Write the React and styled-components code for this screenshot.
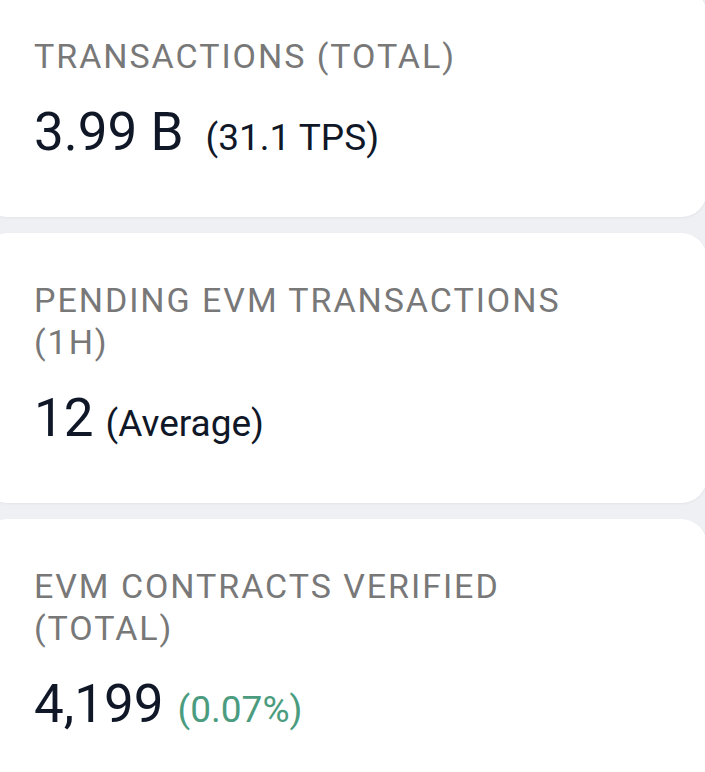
import React from "react";
import styled, { createGlobalStyle } from "styled-components";

const Global = createGlobalStyle`
  html, body {
    margin: 0;
    padding: 0;
    background: #eef0f3;
    overflow: hidden;
  }
  body {
    font-family: Roboto, "Liberation Sans", sans-serif;
  }
`;

const List = styled.div`
  display: flex;
  flex-direction: column;
  gap: 16px;
  margin: -11px -2px 0 -18px;
`;

const Card = styled.div`
  background: #ffffff;
  border-radius: 26px;
  padding: 46px 24px 41px 52px;
  box-shadow: 0 1px 3px rgba(16, 24, 40, 0.05);
`;

const Label = styled.div`
  font-size: 34px;
  line-height: 42px;
  letter-spacing: 1.95px;
  text-transform: uppercase;
  color: #787878;
  max-width: 560px;
`;

const ValueRow = styled.div`
  margin-top: 24px;
  line-height: 62px;
  color: #101828;
  white-space: nowrap;
`;

const Value = styled.span`
  font-size: 53px;
`;

const Extra = styled.span`
  font-size: 37px;
  margin-left: ${(p) => p.$gap}px;
  color: ${(p) => (p.$tone === "up" ? "#4b9c7f" : "#101828")};
`;

const stats = [
  { label: "Transactions (total)", value: "3.99 B", extra: "(31.1 TPS)", gap: 22 },
  { label: "Pending EVM transactions (1h)", value: "12", extra: "(Average)", gap: 12 },
  {
    label: "EVM contracts verified (total)",
    value: "4,199",
    extra: "(0.07%)",
    gap: 14,
    tone: "up",
  },
];

export default function App() {
  return (
    <>
      <Global />
      <List>
        {stats.map((s) => (
          <Card key={s.label}>
            <Label>{s.label}</Label>
            <ValueRow>
              <Value>{s.value}</Value>
              <Extra $gap={s.gap} $tone={s.tone}>
                {s.extra}
              </Extra>
            </ValueRow>
          </Card>
        ))}
      </List>
    </>
  );
}
